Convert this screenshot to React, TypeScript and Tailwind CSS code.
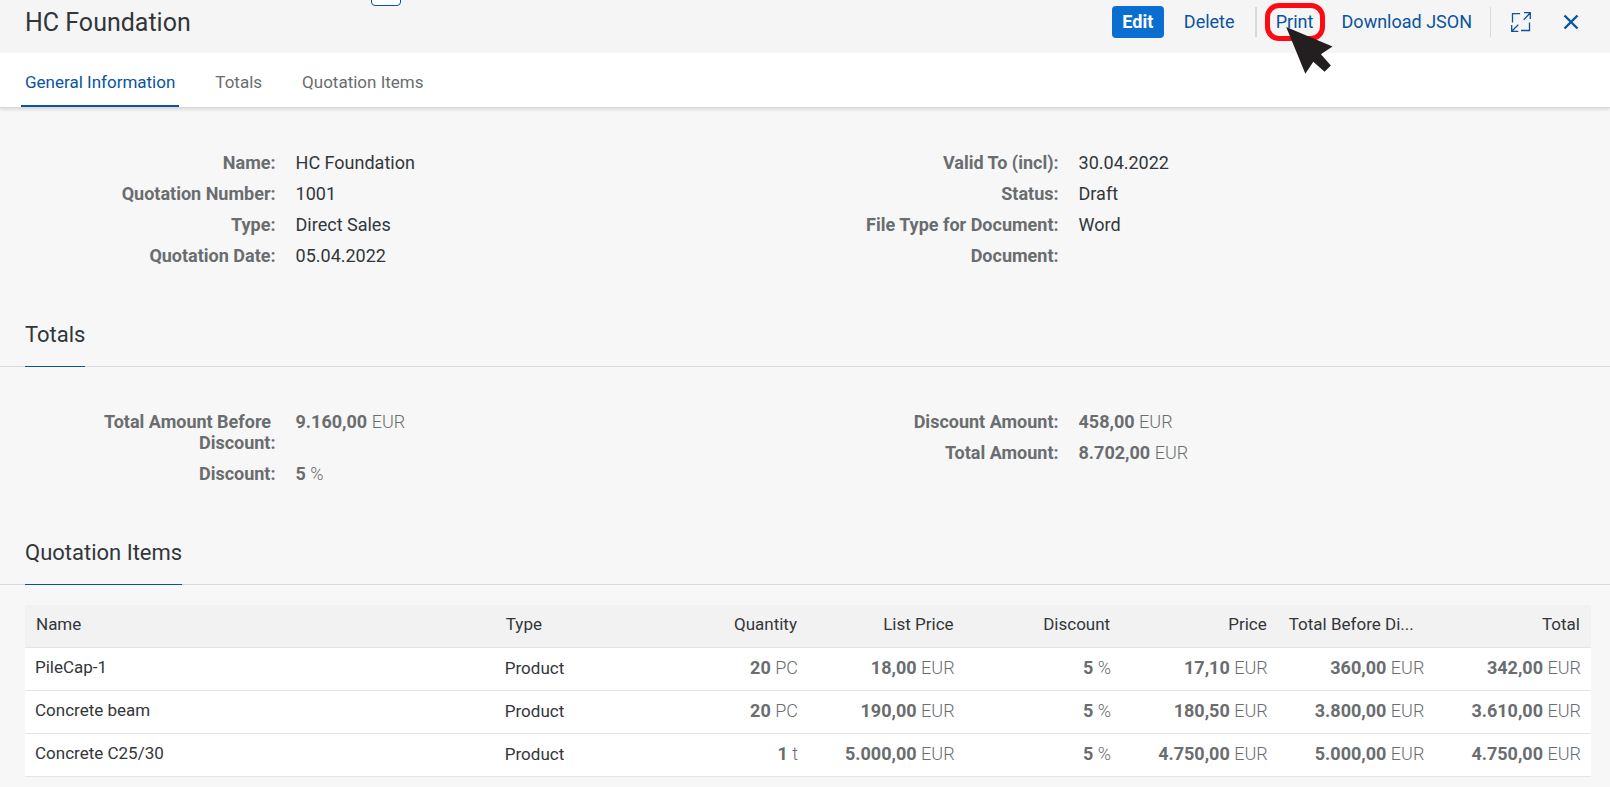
import React from 'react';

type Amount = {
  value: string;
  unit: string;
};

type Field = {
  label: string;
  text?: string;
  amount?: Amount;
};

type QuotationItem = {
  name: string;
  type: string;
  amounts: Amount[];
};

const TABS = ['General Information', 'Totals', 'Quotation Items'];

const GENERAL_LEFT: Field[] = [
  { label: 'Name:', text: 'HC Foundation' },
  { label: 'Quotation Number:', text: '1001' },
  { label: 'Type:', text: 'Direct Sales' },
  { label: 'Quotation Date:', text: '05.04.2022' },
];

const GENERAL_RIGHT: Field[] = [
  { label: 'Valid To (incl):', text: '30.04.2022' },
  { label: 'Status:', text: 'Draft' },
  { label: 'File Type for Document:', text: 'Word' },
  { label: 'Document:' },
];

const TOTALS_LEFT: Field[] = [
  { label: 'Total Amount Before\u00a0\nDiscount:', amount: { value: '9.160,00', unit: 'EUR' } },
  { label: 'Discount:', amount: { value: '5', unit: '%' } },
];

const TOTALS_RIGHT: Field[] = [
  { label: 'Discount Amount:', amount: { value: '458,00', unit: 'EUR' } },
  { label: 'Total Amount:', amount: { value: '8.702,00', unit: 'EUR' } },
];

const AMOUNT_COLUMNS = [
  { label: 'Quantity', align: 'text-right' },
  { label: 'List Price', align: 'text-right' },
  { label: 'Discount', align: 'text-right' },
  { label: 'Price', align: 'text-right' },
  { label: 'Total Before Di...', align: 'text-left' },
  { label: 'Total', align: 'text-right' },
];

const ITEMS: QuotationItem[] = [
  {
    name: 'PileCap-1',
    type: 'Product',
    amounts: [
      { value: '20', unit: 'PC' },
      { value: '18,00', unit: 'EUR' },
      { value: '5', unit: '%' },
      { value: '17,10', unit: 'EUR' },
      { value: '360,00', unit: 'EUR' },
      { value: '342,00', unit: 'EUR' },
    ],
  },
  {
    name: 'Concrete beam',
    type: 'Product',
    amounts: [
      { value: '20', unit: 'PC' },
      { value: '190,00', unit: 'EUR' },
      { value: '5', unit: '%' },
      { value: '180,50', unit: 'EUR' },
      { value: '3.800,00', unit: 'EUR' },
      { value: '3.610,00', unit: 'EUR' },
    ],
  },
  {
    name: 'Concrete C25/30',
    type: 'Product',
    amounts: [
      { value: '1', unit: 't' },
      { value: '5.000,00', unit: 'EUR' },
      { value: '5', unit: '%' },
      { value: '4.750,00', unit: 'EUR' },
      { value: '5.000,00', unit: 'EUR' },
      { value: '4.750,00', unit: 'EUR' },
    ],
  },
];

function AmountText({ amount }: { amount: Amount }) {
  return (
    <span className="whitespace-nowrap text-[#6a6d70]">
      <span className="font-bold">{amount.value}</span>{' '}
      <span className="font-light">{amount.unit}</span>
    </span>
  );
}

function FieldList({ fields }: { fields: Field[] }) {
  return (
    <dl className="flex flex-col gap-[10px]">
      {fields.map((field) => (
        <div key={field.label} className="flex gap-5">
          <dt className="w-[32%] whitespace-pre-line text-right font-bold text-[#6a6d70]">
            {field.label}
          </dt>
          <dd>{field.amount ? <AmountText amount={field.amount} /> : field.text}</dd>
        </div>
      ))}
    </dl>
  );
}

function SectionTitle({ children }: { children: React.ReactNode }) {
  return (
    <div className="flex border-b border-[#d9d9d9] px-[25px]">
      <h2 className="-mb-px border-b border-[#0854a0] pb-[17px] text-[22px] leading-7">{children}</h2>
    </div>
  );
}

function Header() {
  return (
    <header className="relative z-10 flex h-[53px] items-start justify-between bg-[#f5f5f5] pl-[25px] pr-[29px]">
      <span className="absolute -top-1 left-[371px] h-[10px] w-[30px] rounded-b border border-[#0854a0] bg-white" />

      <h1 className="pt-[9px] text-[25px] leading-7">HC Foundation</h1>

      <div className="flex items-center pt-[6px] text-[#0854a0]">
        <button type="button" className="h-8 w-[52px] rounded bg-[#0a6ed1] pb-[2px] font-bold text-white">
          Edit
        </button>
        <button type="button" className="ml-5 h-8 pb-[2px]">
          Delete
        </button>
        <span className="ml-5 h-[30px] w-[2px] bg-[#d9d9d9]" />
        <div className="relative ml-2">
          <button
            type="button"
            className="-my-1 h-[38px] w-[60px] rounded-[14px] border-[5px] border-[#ff0a12] pb-[2px]"
          >
            Print
          </button>
          <svg
            className="absolute left-[21px] top-5 h-[47px] w-[47px]"
            viewBox="111 80 141 142"
            fill="#231f20"
            aria-hidden="true"
          >
            <path d="M111 80 251 139 216 162 246 196 227 215 193 185 169 221Z" />
          </svg>
        </div>
        <button type="button" className="ml-[17px] h-8 pb-[2px]">
          Download JSON
        </button>
        <span className="ml-[18px] h-[30px] w-px bg-[#d9d9d9]" />
        <button type="button" aria-label="Full screen" className="ml-5 flex h-8 w-5 items-center">
          <svg
            className="h-5 w-5"
            viewBox="0 0 20 20"
            fill="none"
            stroke="currentColor"
            strokeWidth="1.3"
            aria-hidden="true"
          >
            <path d="M1.5 10.5V1.7H9M18.5 10.5v8H10M13 .7h6.3V7M19.3.7 12.7 7.7M7.3 19.3H.7V13M.7 19.3l6.6-6.6" />
          </svg>
        </button>
        <button type="button" aria-label="Close" className="ml-[30px] flex h-8 w-5 items-center justify-center">
          <svg
            className="h-4 w-4"
            viewBox="0 0 16 16"
            fill="none"
            stroke="currentColor"
            strokeWidth="2.4"
            aria-hidden="true"
          >
            <path d="M1.5 1.5 14.5 14.5M14.5 1.5 1.5 14.5" />
          </svg>
        </button>
      </div>
    </header>
  );
}

export default function App() {
  return (
    <div className="min-h-screen bg-[#f7f7f7] font-['Roboto',sans-serif] text-[18px] leading-[21px] text-[#32363a]">
      <Header />

      <nav className="relative flex h-[54px] gap-8 bg-white pl-[21px] text-[17px] shadow-[0_1px_1px_#d9d9d9,0_2px_4px_#00000026]">
        {TABS.map((tab, index) => (
          <a
            key={tab}
            href="#"
            className={
              index === 0
                ? 'border-b-2 border-[#0854a0] px-1 pt-[19px] text-[#0854a0]'
                : 'px-1 pt-[19px] text-[#6a6d70]'
            }
          >
            {tab}
          </a>
        ))}
      </nav>

      <main>
        <section className="grid grid-cols-2 pb-[55px] pl-[25px] pr-[19px] pt-[45px]">
          <FieldList fields={GENERAL_LEFT} />
          <FieldList fields={GENERAL_RIGHT} />
        </section>

        <section>
          <SectionTitle>Totals</SectionTitle>
          <div className="grid grid-cols-2 pb-[55px] pl-[25px] pr-[19px] pt-11">
            <FieldList fields={TOTALS_LEFT} />
            <FieldList fields={TOTALS_RIGHT} />
          </div>
        </section>

        <section>
          <SectionTitle>Quotation Items</SectionTitle>
          <div className="pl-[25px] pr-[19px] pt-5">
            <table className="w-full table-fixed border-collapse">
              <thead>
                <tr className="h-[42px] border-b border-[#e5e5e5] bg-[#f2f2f2] text-[17px]">
                  <th className="w-[30%] px-[11px] pb-[2px] text-left font-normal">Name</th>
                  <th className="w-[10%] px-[11px] pb-[2px] text-left font-normal">Type</th>
                  {AMOUNT_COLUMNS.map(({ label, align }) => (
                    <th
                      key={label}
                      className={`w-[10%] whitespace-nowrap px-[11px] pb-[2px] font-normal ${align}`}
                    >
                      {label}
                    </th>
                  ))}
                </tr>
              </thead>
              <tbody>
                {ITEMS.map((item) => (
                  <tr key={item.name} className="h-[43px] border-b border-[#e5e5e5] bg-white">
                    <td className="px-[10px] pb-[2px] text-[17px]">{item.name}</td>
                    <td className="px-[10px] text-[17px]">{item.type}</td>
                    {item.amounts.map((amount, index) => (
                      <td key={AMOUNT_COLUMNS[index].label} className="px-[10px] pb-[2px] text-right">
                        <AmountText amount={amount} />
                      </td>
                    ))}
                  </tr>
                ))}
              </tbody>
            </table>
          </div>
        </section>
      </main>
    </div>
  );
}
